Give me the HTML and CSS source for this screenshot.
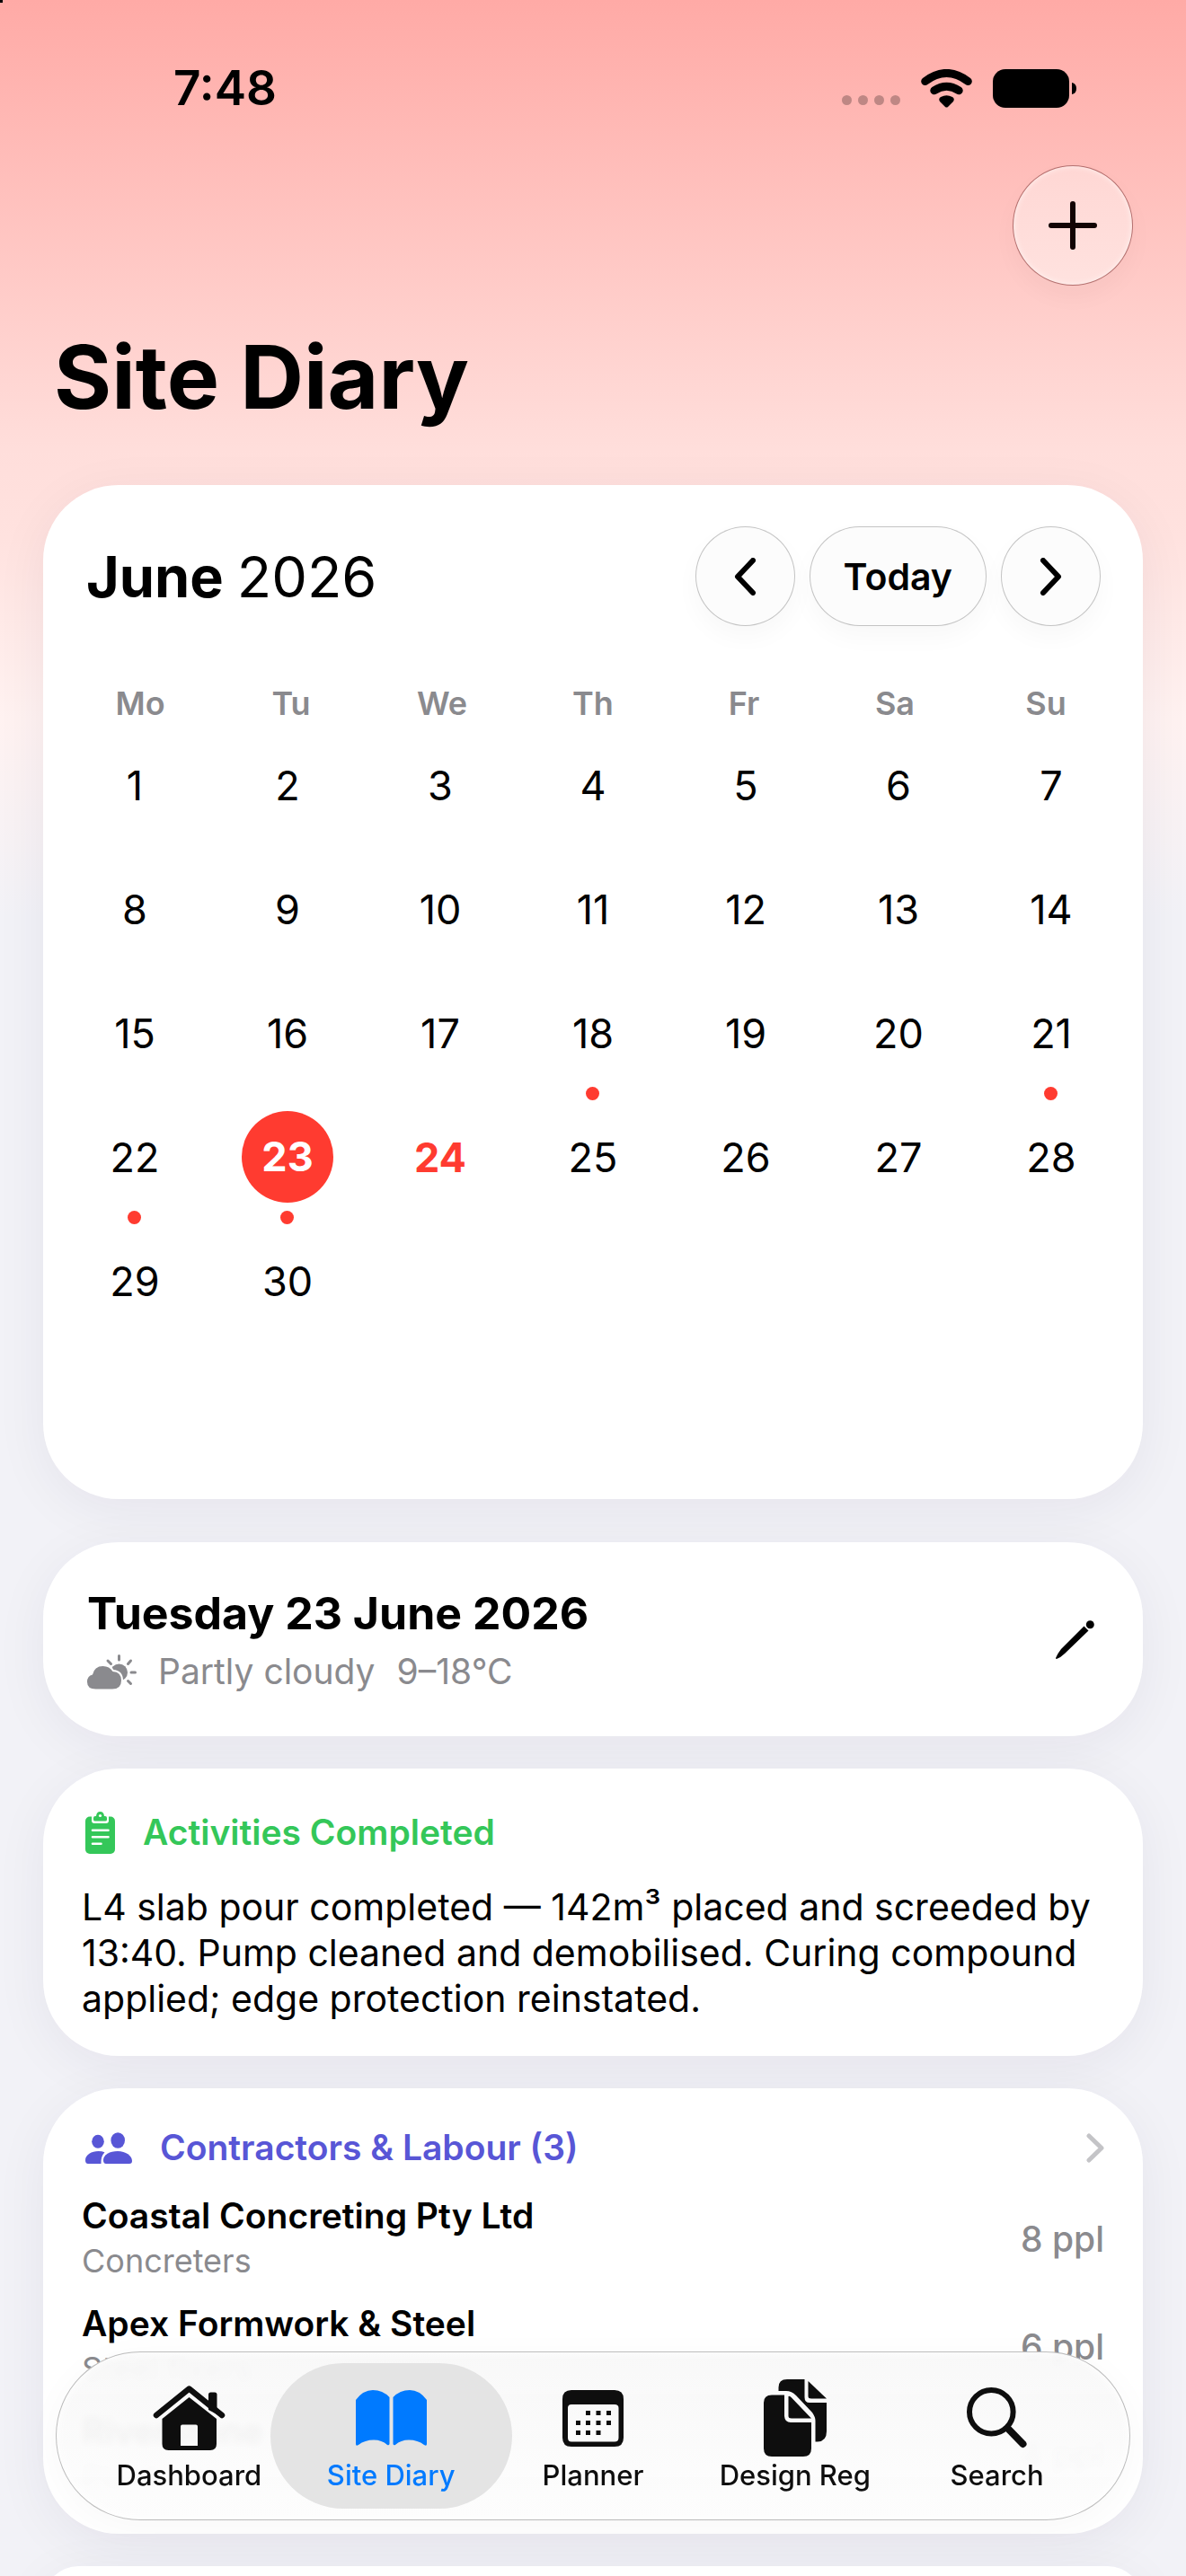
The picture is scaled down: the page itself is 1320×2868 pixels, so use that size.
FILE: index.html
```html
<!DOCTYPE html>
<html lang="en">

<head>
    <meta charset="UTF-8">
    <meta name="viewport" content="width=device-width, initial-scale=1.0">
    <title>Site Diary</title>
    <link rel="stylesheet" href="styles.css">
</head>

<body>

    <header>
        <div class="status-bar">
            <span class="time">7:48</span>
            <div class="status-icons">
                <svg class="signal" width="65" height="11" viewBox="0 0 65 11"><circle cx="5.5" cy="5.5" r="5.5"/><circle cx="23.5" cy="5.5" r="5.5"/><circle cx="41.5" cy="5.5" r="5.5"/><circle cx="59.5" cy="5.5" r="5.5"/></svg>
                <svg width="57" height="43" viewBox="0 0 57 43">
                    <path d="M4.7 13.5Q28.5 -4.5 52.3 13.5M14.8 23.8Q28.5 14.8 42.2 23.8" fill="none" stroke="#000" stroke-width="9" stroke-linecap="round"/>
                    <path d="M27 42L21 36Q19 33 22 31Q28.5 27.500 35 31Q38 33 36 36L30 42Q28.500 43 27 42Z"/>
                </svg>
                <svg width="93" height="43" viewBox="0 0 93 43"><rect width="85" height="43" rx="14"/><path d="M88 15Q93 16 93 21.500Q93 27 88 28Z"/></svg>
            </div>
        </div>
        <div class="toolbar">
            <button class="glass add" aria-label="Add entry">
                <svg width="54" height="54" viewBox="0 0 54 54"><path d="M27 3V51M3 27H51" stroke="#120404" stroke-width="6" stroke-linecap="round"/></svg>
            </button>
        </div>
        <h1>Site Diary</h1>
    </header>

    <main>
        <section class="card calendar">
            <div class="calendar-head">
                <h2>June <span>2026</span></h2>
                <div class="calendar-nav">
                    <button class="glass round" aria-label="Previous month">
                        <svg width="26" height="42" viewBox="0 0 26 42"><path d="M22 3L5 21L22 39"/></svg>
                    </button>
                    <button class="glass today">Today</button>
                    <button class="glass round" aria-label="Next month">
                        <svg width="26" height="42" viewBox="0 0 26 42"><path d="M4 3L21 21L4 39"/></svg>
                    </button>
                </div>
            </div>
            <div class="weekdays">
                <span>Mo</span><span>Tu</span><span>We</span><span>Th</span><span>Fr</span><span>Sa</span><span>Su</span>
            </div>
            <div class="days">
                <button>1</button><button>2</button><button>3</button><button>4</button><button>5</button><button>6</button><button>7</button>
                <button>8</button><button>9</button><button>10</button><button>11</button><button>12</button><button>13</button><button>14</button>
                <button>15</button><button>16</button><button>17</button><button class="entry">18</button><button>19</button><button>20</button><button class="entry">21</button>
                <button class="entry">22</button><button class="entry selected"><span>23</span></button><button class="current">24</button><button>25</button><button>26</button><button>27</button><button>28</button>
                <button>29</button><button>30</button>
            </div>
        </section>

        <section class="card day">
            <div>
                <h2>Tuesday 23 June 2026</h2>
                <p class="weather">
                    <svg width="55" height="39" viewBox="0 0 55 39">
                        <circle cx="35.500" cy="20" r="9.500"/>
                        <path d="M35.500 1.500V6M23 7L26.500 10.500M48.500 7L45.500 10.500M49 20H53.500M45.500 29.500L48.500 32.500" fill="none" stroke="#8a8a8e" stroke-width="3" stroke-linecap="round"/>
                        <path d="M9.500 38.500Q0 38.500 0 30.500Q0 24 6 22.500Q8 13 17.500 13Q25 13 28.500 19Q38 19.500 38 29Q38 38.500 28 38.500Z" stroke="#fff" stroke-width="4" paint-order="stroke"/>
                    </svg>
                    <span>Partly cloudy</span>
                    <span>9–18°C</span>
                </p>
            </div>
            <button class="plain" aria-label="Edit day">
                <svg width="43" height="43" viewBox="0 0 43 43"><circle cx="38.300" cy="4.700" r="4.500"/><path d="M31.500 6.500L36.500 11.500L10 37Q6 41 1 43Q0 43 0 42Q2 37 6 32Z"/></svg>
            </button>
        </section>

        <section class="card">
            <h3 class="green">
                <svg width="33" height="47" viewBox="0 0 33 47">
                    <rect y="5.500" width="33" height="41.500" rx="5" fill="#34c759"/>
                    <rect x="7" y="2" width="19" height="11" rx="3" fill="#fff"/>
                    <path d="M9 7Q9 5 11 5H12Q12.500 0 16.500 0Q20.500 0 21 5H22Q24 5 24 7V9Q24 10.500 22 10.500H11Q9 10.500 9 9Z" fill="#34c759"/>
                    <circle cx="16.500" cy="4.500" r="1.600" fill="#fff"/>
                    <path d="M8 20.700H25.500M8 28.200H25.500M8 35.700H17.500" stroke="#fff" stroke-width="2.600" stroke-linecap="round"/>
                </svg>
                Activities Completed
            </h3>
            <p class="note">L4 slab pour completed — 142m³ placed and screeded by 13:40. Pump cleaned and demobilised. Curing compound applied; edge protection reinstated.</p>
        </section>

        <section class="card contractors">
            <h3 class="indigo">
                <svg width="52" height="35" viewBox="0 0 52 35" fill="#5856d6">
                    <ellipse cx="14" cy="10.300" rx="6.800" ry="7.500"/>
                    <ellipse cx="36.200" cy="9" rx="7.800" ry="8.700"/>
                    <path d="M0 31C0 25 7 21 14.500 21Q18.500 21 21.500 22.300Q17 27 17.500 35H3Q0 35 0 31Z"/>
                    <path d="M20 31C20 25 27 21 36 21C45 21 52 26 52 32Q52 35 49 35H23Q20 35 20 31Z"/>
                </svg>
                Contractors &amp; Labour (3)
                <svg class="more" width="20" height="33" viewBox="0 0 20 33"><path d="M3 3L17 16.500L3 30"/></svg>
            </h3>
            <ul>
                <li>
                    <div><strong>Coastal Concreting Pty Ltd</strong><small>Concreters</small></div>
                    <span>8 ppl</span>
                </li>
                <li>
                    <div><strong>Apex Formwork &amp; Steel</strong><small>Steel fixers</small></div>
                    <span>6 ppl</span>
                </li>
                <li>
                    <div><strong>Riverstone Contractors</strong><small>Plant hire</small></div>
                    <span>4 ppl</span>
                </li>
            </ul>
        </section>

        <section class="card"></section>
    </main>

    <nav>
        <a href="#">
            <svg width="81" height="72" viewBox="0 0 81 72">
                <path d="M62 27V10Q62 7.500 64.500 7.500H69Q71.500 7.500 71.500 10V32Z"/>
                <path d="M4 33L40.500 3.500L77 33" fill="none" stroke="#0e0e0e" stroke-width="6.500" stroke-linecap="round" stroke-linejoin="round"/>
                <path fill-rule="evenodd" d="M10.500 37L40.500 13L71 37V65Q71 72 64 72H17.500Q10.500 72 10.500 65ZM33 43.500Q31 43.500 31 45.500V67H50V45.500Q50 43.500 48 43.500Z"/>
            </svg>
            Dashboard
        </a>
        <a href="#" class="active">
            <svg width="79" height="62" viewBox="0 0 79 62">
                <path d="M0 11Q8 0 19 0Q30 0 37.500 8V60Q37 62 35 61Q29 55.500 20 55.500Q10 55.500 3 61Q0 63 0 60Z"/>
                <path d="M79 11Q71 0 60 0Q49 0 41.500 8V60Q42 62 44 61Q50 55.500 59 55.500Q69 55.500 76 61Q79 63 79 60Z"/>
            </svg>
            Site Diary
        </a>
        <a href="#">
            <svg width="68" height="63" viewBox="0 0 68 63">
                <path fill-rule="evenodd" d="M10 0H58Q68 0 68 10V53Q68 63 58 63H10Q0 63 0 53V10Q0 0 10 0ZM10 16Q6 16 6 20V53Q6 57.500 10 57.500H58Q62.500 57.500 62.500 53V20Q62.500 16 58 16Z"/>
                <path d="M26 23h5v5h-5zM37.500 23h5v5h-5zM49 23h5v5h-5zM15 34h5v5h-5zM26 34h5v5h-5zM37.500 34h5v5h-5zM49 34h5v5h-5zM15 45h5v5h-5zM26 45h5v5h-5zM37.500 45h5v5h-5z"/>
            </svg>
            Planner
        </a>
        <a href="#">
            <svg width="70" height="86" viewBox="0 0 70 86">
                <path d="M16.500 13V9Q16.500 0 26 0H45.500V20Q45.500 26 51 26H70V58Q70 69 60 69.500H57.500V46Q57.500 42 54 37L36 18Q31 13 25 13Z"/>
                <path d="M49.500 2L70 21.500H53Q49.500 21.500 49.500 19Z"/>
                <path d="M9 17.500H23V41Q23.500 48 30 48H53V77Q53 86 44 86H9Q0 86 0 77V26Q0 17.500 9 17.500Z"/>
                <path d="M27.500 19Q29 18 31 20.500L53 43.500H31Q27.500 43.500 27.500 41Z"/>
            </svg>
            Design Reg
        </a>
        <a href="#">
            <svg width="67" height="68" viewBox="0 0 67 68" fill="none" stroke="#0e0e0e" stroke-linecap="round"><circle cx="27.300" cy="27.300" r="24.300" stroke-width="6"/><path d="M46 46L62.500 63" stroke-width="8"/></svg>
            Search
        </a>
    </nav>

</body>

</html>
```

FILE: styles.css
```css
* {
    box-sizing: border-box;
}

body {
    font-family: Inter, "Liberation Sans", sans-serif;
    margin: 0;
    height: 100vh;
    overflow: hidden;
    color: #000;
    background: linear-gradient(#ffaaa6 0, #ffdedb 500px, #ffe2df 600px, #fff2f1 800px, #f2f2f7 1020px);
}

/* small notch in the screen corner */
body::before {
    content: "";
    position: absolute;
    top: 0;
    left: 0;
    width: 3px;
    height: 3px;
    background: #000;
}

h1, h2, h3, p, ul {
    margin: 0;
    padding: 0;
}

svg {
    display: block;
    flex: none;
}

button {
    font: inherit;
    color: inherit;
    padding: 0;
    border: none;
    background: none;
    cursor: pointer;
}

.status-bar {
    display: flex;
    justify-content: space-between;
    align-items: center;
    height: 124px;
    padding: 72px 122px 0 193px;
}

.time {
    font-size: 53px;
    font-weight: 600;
}

.status-icons {
    display: flex;
    align-items: center;
    gap: 23px;
}

.signal {
    opacity: 0.25;
    margin-top: 27px;
}

.toolbar {
    display: flex;
    justify-content: flex-end;
    padding: 60px 59px 0;
}

.glass {
    display: flex;
    align-items: center;
    justify-content: center;
    border: 1px solid rgba(0, 0, 0, 0.22);
    border-radius: 67px;
    background: #fcfcfc;
    box-shadow: 0 12px 28px rgba(0, 0, 0, 0.03);
}

.add {
    width: 134px;
    height: 134px;
    border-color: rgba(130, 40, 40, 0.6);
    background: linear-gradient(#ffd7d4, #ffe2df);
    box-shadow: inset 0 0 6px #fff4f2, 0 12px 28px rgba(0, 0, 0, 0.03);
}

h1 {
    font-size: 98px;
    line-height: 120px;
    padding: 42px 60px 60px;
}

main {
    display: flex;
    flex-direction: column;
    gap: 36px;
    padding: 0 48px;
}

.card {
    padding: 41px 43px 38px;
    border-radius: 84px;
    background: #fff;
    box-shadow: 0 12px 60px rgba(30, 20, 60, 0.06);
}

.calendar {
    padding: 46px 0 36px;
    margin-bottom: 12px;
}

.calendar-head {
    display: flex;
    justify-content: space-between;
    align-items: center;
    padding: 0 47px 0 48px;
}

.calendar-head h2 {
    font-size: 63px;
    line-height: 80px;
}

.calendar-head h2 span {
    font-weight: 400;
}

.calendar-nav {
    display: flex;
    gap: 16px;
}

.round {
    width: 111px;
    height: 111px;
}

.round path {
    fill: none;
    stroke: #000;
    stroke-width: 6;
    stroke-linecap: round;
    stroke-linejoin: round;
}

.today {
    font-size: 41px;
    font-weight: 600;
    padding: 0 37px;
}

.weekdays, .days {
    display: grid;
    grid-template-columns: repeat(7, 1fr);
    text-align: center;
}

.weekdays {
    padding: 64px 24px 0;
    font-size: 36px;
    font-weight: 600;
    line-height: 44px;
    color: #8a8a8e;
}

.days {
    grid-template-rows: repeat(6, 138px);
    padding: 0 17px;
}

.days button {
    position: relative;
    font-size: 45px;
}

.entry::after {
    content: "";
    position: absolute;
    left: calc(50% - 8px);
    bottom: -6px;
    width: 15px;
    height: 15px;
    border-radius: 50%;
    background: #ff3b30;
}

.selected span {
    display: block;
    width: 102px;
    margin: auto;
    border-radius: 50%;
    line-height: 102px;
    font-weight: 700;
    color: #fff;
    background: #ff3b30;
}

.days .current {
    font-weight: 700;
    color: #ff3b30;
}

.day {
    display: flex;
    justify-content: space-between;
    align-items: center;
    padding: 48px 54px 48px 49px;
}

.day h2 {
    font-size: 50px;
    line-height: 62px;
}

.weather {
    display: flex;
    align-items: center;
    gap: 24px;
    margin-top: 10px;
    font-size: 39px;
    line-height: 48px;
    color: #8a8a8e;
    fill: #8a8a8e;
}

h3 {
    display: flex;
    align-items: center;
    gap: 31px;
    padding: 4px 4px 0;
    font-size: 39px;
    font-weight: 600;
    line-height: 52px;
}

.green {
    color: #34c759;
}

.indigo {
    color: #5856d6;
}

.more {
    margin-left: auto;
    margin-right: -4px;
    fill: none;
    stroke: #c4c4c7;
    stroke-width: 5;
    stroke-linecap: round;
    stroke-linejoin: round;
}

.note {
    margin-top: 32px;
    font-size: 41px;
    line-height: 51px;
}

.contractors {
    padding-top: 36px;
    padding-bottom: 20px;
}

ul {
    list-style: none;
    margin-top: 24px;
}

li {
    display: flex;
    justify-content: space-between;
    align-items: center;
    height: 102px;
    margin-bottom: 18px;
    font-size: 39px;
    font-weight: 500;
    color: #8a8a8e;
}

li strong, li small {
    display: block;
    line-height: 51px;
}

li strong {
    font-weight: 600;
    color: #000;
}

li small {
    font-size: 36px;
    font-weight: 400;
}

nav {
    position: fixed;
    left: 62px;
    right: 62px;
    bottom: 62px;
    display: flex;
    height: 188px;
    padding: 0 35px;
    border: 1px solid rgba(0, 0, 0, 0.25);
    border-radius: 94px;
    background: linear-gradient(rgba(248, 248, 248, 0.96), rgba(253, 253, 253, 0.97));
    backdrop-filter: blur(4px);
    box-shadow: inset 0 0 10px #fff, 0 8px 40px rgba(0, 0, 0, 0.03);
}

nav a {
    position: relative;
    display: grid;
    grid-template-rows: 86px 36px;
    flex: 1;
    align-content: center;
    align-items: center;
    justify-items: center;
    row-gap: 2px;
    padding-bottom: 2px;
    font-size: 31px;
    font-weight: 500;
    text-decoration: none;
    color: #0e0e0e;
    fill: #0e0e0e;
}

nav .active {
    color: #007aff;
    fill: #007aff;
}

.active::before {
    content: "";
    position: absolute;
    inset: 12px -22px;
    z-index: -1;
    border-radius: 81px;
    background: #e4e4e4;
}
```
